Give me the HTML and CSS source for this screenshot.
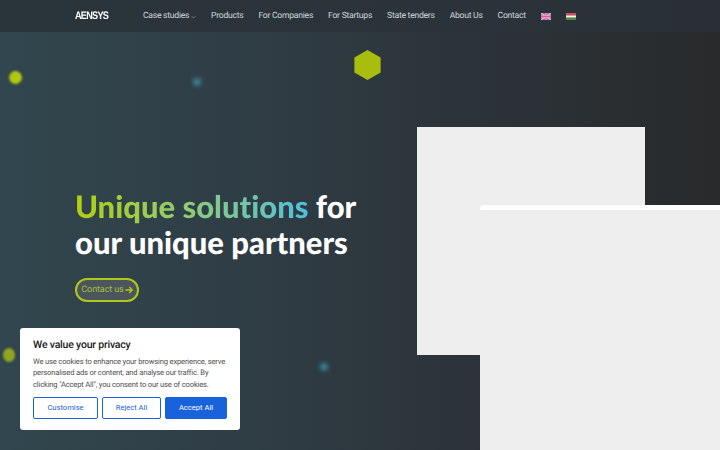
FILE: index.html
```html
<!DOCTYPE html>
<html lang="en">
<head>
    <meta charset="UTF-8">
    <title>Aensys</title>
    <link rel="stylesheet" href="styles.css">
</head>
<body>
    <header class="site-header">
        <a class="logo">AENSYS</a>
        <nav class="main-nav">
            <a>Case studies <svg class="caret" width="5" height="4" viewBox="0 0 5 4"><path d="M.5 1 2.5 3 4.5 1" fill="none" stroke="#8f979c" stroke-width=".7"/></svg></a>
            <a>Products</a>
            <a>For Companies</a>
            <a>For Startups</a>
            <a>State tenders</a>
            <a>About Us</a>
            <a>Contact</a>
            <svg class="flag" viewBox="0 0 10 7">
                <rect width="10" height="7" fill="#8a6fa0"/>
                <path d="M0 0 10 7M10 0 0 7" stroke="#f3b6cf" stroke-width="1.2"/>
                <path d="M5 0V7M0 3.5H10" stroke="#f3b6cf" stroke-width="2.2"/>
                <path d="M5 0V7M0 3.5H10" stroke="#e0589a" stroke-width="1.1"/>
            </svg>
            <svg class="flag flag-hu" viewBox="0 0 10 7">
                <rect width="10" height="2.4" fill="#d8485a"/>
                <rect y="2.4" width="10" height="2.3" fill="#f4f4f4"/>
                <rect y="4.7" width="10" height="2.3" fill="#4f8a3a"/>
            </svg>
        </nav>
    </header>

    <main class="hero">
        <span class="dot dot-lime dot-a"></span>
        <span class="dot dot-lime dot-b"></span>
        <span class="dot dot-blue dot-c"></span>
        <span class="dot dot-blue dot-d"></span>
        <svg class="hexagon" viewBox="0 0 28 32"><path d="M14 0 28 8V24L14 32 0 24V8Z" fill="#a9bd0f"/></svg>

        <div class="panel panel-back"></div>
        <div class="panel panel-front"></div>

        <div class="hero-copy">
            <h1><span class="gradient-text">Unique solutions</span> for<br>our unique partners</h1>
            <a class="contact-btn">Contact us<svg width="8" height="8" viewBox="0 0 9 9"><path d="M.5 4.5H8M4.8 1 8 4.5 4.8 8" fill="none" stroke="#b4cc1a" stroke-width="1.6"/></svg></a>
        </div>
    </main>

    <div class="cookie-box">
        <h2>We value your privacy</h2>
        <p>We use cookies to enhance your browsing experience, serve personalised ads or content, and analyse our traffic. By clicking "Accept All", you consent to our use of cookies.</p>
        <div class="cookie-actions">
            <button class="btn-outline btn-custom">Customise</button>
            <button class="btn-outline btn-reject">Reject All</button>
            <button class="btn-accept">Accept All</button>
        </div>
    </div>
</body>
</html>
```
FILE: styles.css
```css
* {
    margin: 0;
    padding: 0;
    box-sizing: border-box;
}

html, body {
    width: 720px;
    height: 450px;
    overflow: hidden;
}

body {
    position: relative;
    background-color: #282a2b;
    font-family: Roboto, "Noto Sans", sans-serif;
    text-rendering: geometricPrecision;
}

.site-header {
    display: flex;
    align-items: center;
    height: 32px;
    padding-left: 75px;
    background: linear-gradient(90deg, #2a343b 0%, #2a333a 70%, #292f34 100%);
}

.logo {
    width: 68px;
    font-family: "Liberation Sans", sans-serif;
    font-size: 11px;
    font-weight: 700;
    letter-spacing: -0.9px;
    color: #fff;
    transform: scaleX(0.83);
    transform-origin: left;
}

.main-nav {
    display: flex;
    align-items: center;
    gap: 15px;
    font-size: 8.6px;
    letter-spacing: -0.26px;
    color: #d4d8da;
    white-space: nowrap;
}

.caret {
    vertical-align: -1px;
}

.flag {
    width: 10px;
    height: 7px;
}

.hero {
    position: relative;
    height: 418px;
    background: linear-gradient(90deg, #31464e 0%, #2f3d45 35%, #2c343a 62%, #282a2b 100%);
    overflow: hidden;
}

.dot {
    position: absolute;
    border-radius: 50%;
}

.dot-lime {
    background-color: #b2c70f;
    filter: blur(1px);
}

.dot-blue {
    width: 8px;
    height: 8px;
    background-color: #3e8ea0;
    filter: blur(2px);
    opacity: 0.85;
}

.dot-a {
    left: 9px;
    top: 39px;
    width: 13px;
    height: 13px;
}

.dot-b {
    left: 3px;
    top: 316px;
    width: 12px;
    height: 14px;
    opacity: 0.75;
}

.dot-c {
    left: 193px;
    top: 46px;
}

.dot-d {
    left: 320px;
    top: 331px;
}

.hexagon {
    position: absolute;
    left: 354px;
    top: 18px;
    width: 27px;
    height: 30px;
    filter: blur(0.5px);
}

.panel {
    position: absolute;
    background-color: #eeeeee;
}

.panel-back {
    left: 417px;
    top: 95px;
    width: 228px;
    height: 228px;
}

.panel-front {
    left: 480px;
    top: 173px;
    width: 260px;
    height: 260px;
    border-top: 5px solid #fff;
    border-top-left-radius: 4px;
}

.hero-copy {
    padding: 156px 0 0 75px;
}

h1 {
    font-family: Lato, sans-serif;
    font-size: 31px;
    font-weight: 900;
    line-height: 36px;
    font-variant-ligatures: none;
    color: #fff;
}

.gradient-text {
    background: linear-gradient(90deg, #b2cf10 0%, #8fcb78 50%, #4fbfe0 100%);
    -webkit-background-clip: text;
    background-clip: text;
    color: transparent;
}

.contact-btn {
    display: inline-flex;
    align-items: center;
    justify-content: center;
    gap: 1px;
    margin-top: 18px;
    width: 64px;
    height: 24px;
    border: 2px solid #b0c81a;
    border-radius: 12px;
    background-color: #4a565c;
    font-size: 9px;
    letter-spacing: -0.1px;
    color: #a9bd3a;
    white-space: nowrap;
}

.cookie-box {
    position: absolute;
    left: 20px;
    top: 328px;
    width: 220px;
    height: 102px;
    padding: 10px 13px;
    background-color: #fff;
    border-radius: 3px;
    color: #212121;
}

.cookie-box h2 {
    font-size: 10.5px;
    font-weight: 500;
    line-height: 13px;
    letter-spacing: -0.2px;
}

.cookie-box p {
    margin-top: 5px;
    font-size: 7.6px;
    line-height: 11.3px;
    letter-spacing: -0.17px;
    color: #4f4f4f;
}

.cookie-actions {
    display: flex;
    gap: 4px;
    margin-top: 7px;
}

.cookie-actions button {
    height: 22px;
    border-radius: 2px;
    font-family: inherit;
    font-size: 7.6px;
}

.btn-outline {
    background-color: #fff;
    border: 1px solid #1863dc;
    color: #1863dc;
}

.btn-custom {
    width: 65px;
}

.btn-reject {
    width: 59px;
}

.btn-accept {
    width: 62px;
    background-color: #1863dc;
    border: 1px solid #1863dc;
    color: #fff;
}
```
